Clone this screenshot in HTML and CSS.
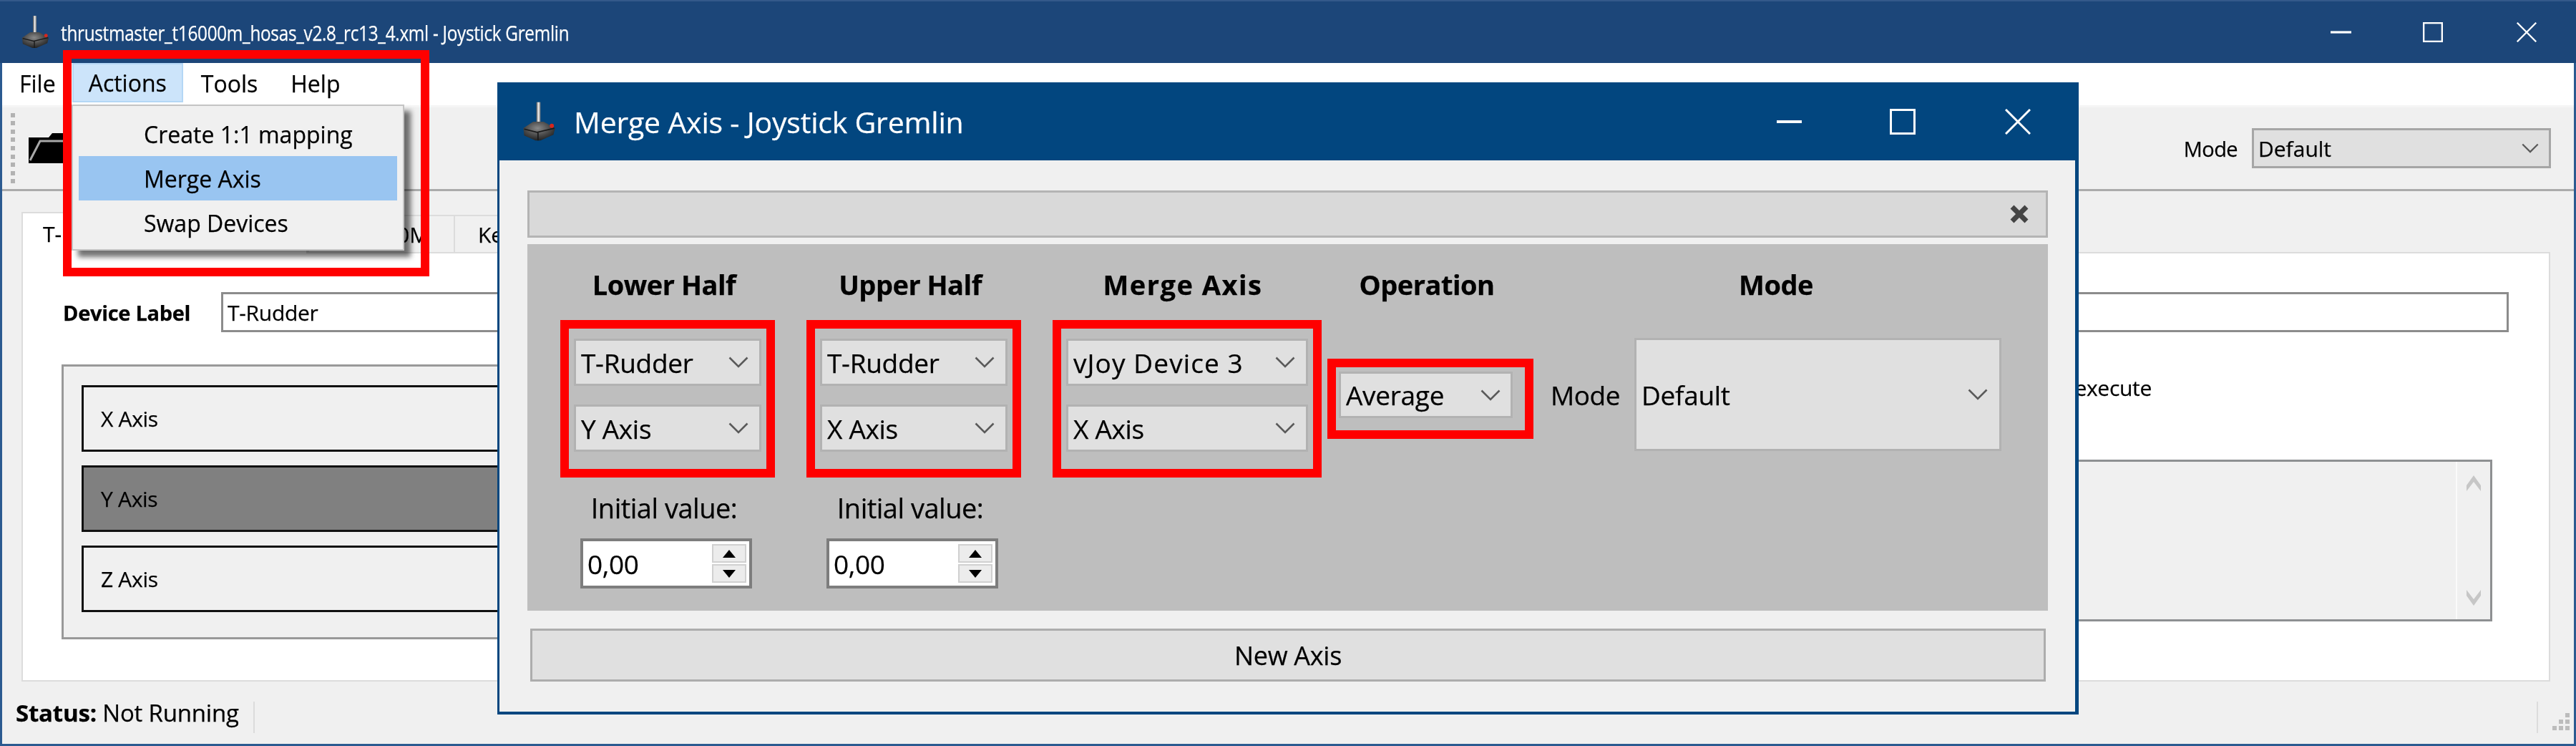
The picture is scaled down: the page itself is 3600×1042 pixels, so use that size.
FILE: index.html
```html
<!DOCTYPE html>
<html lang="en">
<head>
<meta charset="utf-8">
<title>Joystick Gremlin</title>
<link rel="stylesheet" href="styles.css">
</head>
<body>
<svg class="defs" width="0" height="0" aria-hidden="true">
  <defs>
    <linearGradient id="stick" x1="0" x2="1" y1="0" y2="0"><stop offset="0" stop-color="#555"/><stop offset="0.5" stop-color="#eee"/><stop offset="1" stop-color="#777"/></linearGradient>
    <radialGradient id="base" cx="0.45" cy="0.35" r="0.7"><stop offset="0" stop-color="#8a8a8a"/><stop offset="0.55" stop-color="#4a4a4a"/><stop offset="1" stop-color="#1c1c1c"/></radialGradient>
    <symbol id="joy" viewBox="0 0 44 48">
      <rect x="19" y="0" width="5" height="28" fill="url(#stick)"/>
      <path d="M3 32 L15 24 L28 24 L42 32 L40 40 L24 47 L18 47 L4 41 Z" fill="url(#base)"/>
      <path d="M21 36 V47 M4 33 L20 37 L41 32" stroke="#1a1a1a" stroke-width="1.5" fill="none"/>
      <circle cx="38" cy="29" r="2.6" fill="#d9261c"/>
    </symbol>
    <symbol id="chev" viewBox="0 0 28 16">
      <path d="M1.5 1.5 L14 14 L26.5 1.5" fill="none" stroke="#5a5a5a" stroke-width="2.6"/>
    </symbol>
    <symbol id="min" viewBox="0 0 36 4"><rect width="36" height="4" fill="#fff"/></symbol>
    <symbol id="max" viewBox="0 0 36 36"><rect x="1.5" y="1.5" width="33" height="33" fill="none" stroke="#fff" stroke-width="3"/></symbol>
    <symbol id="cls" viewBox="0 0 36 36"><path d="M1 1 L35 35 M35 1 L1 35" fill="none" stroke="#fff" stroke-width="3"/></symbol>
  </defs>
</svg>

<div class="screen">
  <div class="app">
    <header class="titlebar">
      <svg class="title-icon"><use href="#joy"/></svg>
      <span class="title-text">thrustmaster_t16000m_hosas_v2.8_rc13_4.xml - Joystick Gremlin</span>
      <div class="winbtns">
        <svg class="wb wb-min"><use href="#min"/></svg>
        <svg class="wb wb-max"><use href="#max"/></svg>
        <svg class="wb wb-cls"><use href="#cls"/></svg>
      </div>
    </header>

    <nav class="menubar">
      <span class="menu-item">File</span>
      <span class="menu-item menu-item-active">Actions</span>
      <span class="menu-item">Tools</span>
      <span class="menu-item">Help</span>
    </nav>

    <div class="toolbar">
      <div class="grip"><i></i><i></i><i></i><i></i><i></i><i></i><i></i><i></i><i></i></div>
      <svg class="folder" viewBox="0 0 64 42">
        <path d="M0 6 H28 L33 0 H56 L60 6 H64 V42 H0 Z" fill="#000"/>
        <path d="M2 38 L16 11 H64" fill="none" stroke="#a8a8a8" stroke-width="3"/>
      </svg>
      <div class="toolbar-mode">
        <span class="toolbar-mode-label">Mode</span>
        <div class="select select-toolbar"><span>Default</span><svg class="chev chev-small"><use href="#chev"/></svg></div>
      </div>
    </div>

    <main class="content">
      <div class="tabs">
        <div class="tab tab-active">T-Rudder</div>
        <div class="tab tab-second">T.16000M</div>
        <div class="tab tab-third">Keyboard</div>
      </div>
      <section class="tab-panel">
        <div class="label-row">
          <label class="device-label">Device Label</label>
          <div class="text-input">T-Rudder</div>
        </div>
        <div class="panel-columns">
          <div class="axis-group">
            <div class="axis-row">X Axis</div>
            <div class="axis-row axis-row-selected">Y Axis</div>
            <div class="axis-row">Z Axis</div>
          </div>
          <div class="action-column">
            <div class="exec-line">execute</div>
            <div class="list-box">
              <div class="list-scroll">
                <svg class="scroll-arrow" viewBox="0 0 22 26"><path d="M1 24 V16 L11 2 L21 16 V24 L11 11 Z" fill="#c6c6c6"/></svg>
                <svg class="scroll-arrow" viewBox="0 0 22 26"><path d="M1 2 V10 L11 24 L21 10 V2 L11 15 Z" fill="#c6c6c6"/></svg>
              </div>
            </div>
          </div>
        </div>
      </section>
    </main>

    <footer class="statusbar">
      <span class="status-text"><b>Status:</b> Not Running</span>
      <span class="status-sep"></span>
      <span class="status-sep status-sep-right"></span>
      <div class="size-grip"><i></i><i></i><i></i><i></i><i></i><i></i></div>
    </footer>
  </div>

  <div class="dropdown">
    <div class="dropdown-item">Create 1:1 mapping</div>
    <div class="dropdown-item dropdown-item-hover">Merge Axis</div>
    <div class="dropdown-item">Swap Devices</div>
  </div>
  <div class="annotation-menu"></div>

  <div class="dialog">
    <header class="dialog-title">
      <svg class="dialog-icon"><use href="#joy"/></svg>
      <span class="dialog-title-text">Merge Axis - Joystick Gremlin</span>
      <div class="winbtns dialog-winbtns">
        <svg class="dwb dwb-min"><use href="#min"/></svg>
        <svg class="dwb dwb-max"><use href="#max"/></svg>
        <svg class="dwb dwb-cls"><use href="#cls"/></svg>
      </div>
    </header>
    <div class="dialog-body">
      <div class="entry-header">
        <svg class="entry-close" viewBox="0 0 30 30"><path d="M5 5 L25 25 M25 5 L5 25" fill="none" stroke="#444" stroke-width="7"/></svg>
      </div>
      <div class="entry-panel">
        <div class="col col-half">
          <div class="col-head">Lower Half</div>
          <div class="redbox redbox-pair">
            <div class="select select-half"><span>T-Rudder</span><svg class="chev"><use href="#chev"/></svg></div>
            <div class="select select-half"><span>Y Axis</span><svg class="chev"><use href="#chev"/></svg></div>
          </div>
          <div class="init-label">Initial value:</div>
          <div class="spin"><span class="spin-value">0,00</span><div class="spin-btns"><div class="spin-btn"><i class="tri-up"></i></div><div class="spin-btn"><i class="tri-down"></i></div></div></div>
        </div>
        <div class="col col-half">
          <div class="col-head">Upper Half</div>
          <div class="redbox redbox-pair">
            <div class="select select-half"><span>T-Rudder</span><svg class="chev"><use href="#chev"/></svg></div>
            <div class="select select-half"><span>X Axis</span><svg class="chev"><use href="#chev"/></svg></div>
          </div>
          <div class="init-label">Initial value:</div>
          <div class="spin"><span class="spin-value">0,00</span><div class="spin-btns"><div class="spin-btn"><i class="tri-up"></i></div><div class="spin-btn"><i class="tri-down"></i></div></div></div>
        </div>
        <div class="col col-merge">
          <div class="col-head col-head-wide">Merge Axis</div>
          <div class="redbox redbox-pair">
            <div class="select select-half"><span class="vjoy-text">vJoy Device 3</span><svg class="chev"><use href="#chev"/></svg></div>
            <div class="select select-half"><span>X Axis</span><svg class="chev"><use href="#chev"/></svg></div>
          </div>
        </div>
        <div class="col col-op">
          <div class="col-head">Operation</div>
          <div class="redbox redbox-op">
            <div class="select select-op"><span>Average</span><svg class="chev"><use href="#chev"/></svg></div>
          </div>
        </div>
        <div class="col col-mode">
          <div class="col-head">Mode</div>
          <div class="mode-row">
            <span class="mode-label">Mode</span>
            <div class="select select-mode"><span>Default</span><svg class="chev"><use href="#chev"/></svg></div>
          </div>
        </div>
      </div>
      <div class="new-axis">New Axis</div>
    </div>
  </div>
</div>
</body>
</html>
```

FILE: styles.css
```css
* { box-sizing: border-box; }
html, body { margin: 0; padding: 0; background: #f0f0f0; }
body { font-family: "Open Sans", "Noto Sans", sans-serif; color: #000; overflow: hidden; -webkit-text-stroke: 0.25px; }
.defs { position: absolute; }
.screen { position: relative; width: 3600px; height: 1042px; overflow: hidden; filter: blur(0.6px); }

/* main window */
.app { display: flex; flex-direction: column; width: 3600px; height: 1042px; background: #f0f0f0; border-left: 3px solid #2b5a90; border-right: 3px solid #2b5a90; border-bottom: 3px solid #2b5a90; }
.titlebar { flex: none; display: flex; align-items: center; height: 88px; margin: 0 -3px; padding-left: 28px; background: #1c4679; border-top: 2px solid #34598a; color: #fff; }
.title-icon { flex: none; width: 42px; height: 46px; }
.title-text { flex: none; width: 845px; margin-left: 15px; font-size: 30px; white-space: nowrap; letter-spacing: -0.35px; transform: scaleX(0.81); transform-origin: left center; }
.winbtns { display: flex; align-items: center; margin-left: auto; padding-right: 54px; }
.wb { display: block; }
.wb-min { width: 29px; height: 4px; }
.wb-max { width: 28px; height: 28px; margin-left: 100px; }
.wb-cls { width: 30px; height: 28px; margin-left: 102px; }

.menubar { flex: none; display: flex; height: 62px; padding: 0 0 4px 1px; background: #fff; border-bottom: 3px solid #f5f5f5; font-size: 32px; }
.menu-item { display: flex; align-items: center; padding: 2px 23px 0; height: 55px; }
.menu-item:nth-child(3) { padding-left: 25px; }
.menu-item-active { background: #cce4fa; border: 2px solid #b4d7f5; padding: 0 21px; }

.toolbar { flex: none; display: flex; align-items: center; height: 117px; padding-left: 12px; border-bottom: 3px solid #ababab; }
.grip { display: flex; flex-direction: column; gap: 5.6px; width: 6px; }
.grip i { display: block; width: 6px; height: 6px; background: #b2b2b2; }
.folder { width: 64px; height: 42px; margin-left: 19px; }
.toolbar-mode { display: flex; align-items: center; margin-left: auto; padding-right: 32px; }
.toolbar-mode-label { font-size: 29px; margin-right: 20px; letter-spacing: -0.6px; }

.select { display: flex; align-items: center; justify-content: space-between; background: #e0e0e0; border: 3px solid #b2b2b2; white-space: nowrap; }
.select-toolbar { width: 418px; height: 56px; padding: 0 14px 0 6px; font-size: 30px; border-color: #a6a6a6; }
.chev { flex: none; display: block; width: 28px; height: 16px; }
.chev-small { width: 24px; height: 14px; }

.content { flex: 1; display: flex; flex-direction: column; padding: 28px 33px 0 27px; }
.tabs { flex: none; display: flex; align-items: flex-end; height: 57px; font-size: 30px; }
.tab { display: flex; align-items: center; background: #f0f0f0; border: 2px solid #dcdcdc; border-bottom: none; white-space: nowrap; height: 52px; }
.tab-active { width: 400px; height: 58px; padding-left: 28px; margin-bottom: -2px; position: relative; background: #fff; }
.tab-second { width: 206px; padding-left: 30px; }
.tab-third { width: 220px; padding-left: 32px; margin-left: -2px; }
.tab-panel { flex: none; height: 600px; background: #fff; border: 2px solid #dcdcdc; padding: 54px 0 0 56px; }
.label-row { display: flex; align-items: center; height: 56px; }
.device-label { width: 221px; font-size: 29px; font-weight: 700; letter-spacing: -0.3px; }
.text-input { width: 3197px; height: 56px; display: flex; align-items: center; padding-left: 6px; border: 3px solid #8c8c8c; background: #fff; font-size: 30px; letter-spacing: -0.3px; }
.panel-columns { display: flex; margin-top: 45px; }
.axis-group { flex: none; width: 1400px; height: 384px; margin-left: -2px; padding: 26px 25px 0; display: flex; flex-direction: column; gap: 19px; background: #f0f0f0; border: 3px solid #999; }
.axis-row { height: 93px; display: flex; align-items: center; padding-left: 24px; border: 3px solid #111; font-size: 30px; letter-spacing: -0.3px; background: #f0f0f0; }
.axis-row-selected { background: #808080; }
.action-column { flex: none; width: 1996px; margin-left: 14px; }
.exec-line { margin-top: 11px; height: 44px; line-height: 44px; width: 1507px; font-size: 30px; text-align: right; letter-spacing: -0.3px; }
.list-box { display: flex; justify-content: flex-end; width: 1983px; height: 226px; margin-top: 78px; background: #f0f0f0; border: 3px solid #8e9092; }
.list-scroll { width: 48px; height: 100%; border-left: 2px solid #fafafa; display: flex; flex-direction: column; align-items: center; justify-content: space-between; padding: 17px 0 17px; }
.scroll-arrow { width: 22px; height: 26px; }

.statusbar { flex: 1; display: flex; align-items: center; padding-left: 19px; font-size: 33px; }
.status-text { white-space: nowrap; letter-spacing: -0.2px; }
.status-sep { width: 2px; height: 44px; margin-left: 20px; margin-top: 12px; background: #dcdcdc; }
.status-sep-right { margin-left: auto; margin-right: 20px; }
.size-grip { display: grid; grid-template-columns: repeat(3, 6px); grid-template-rows: repeat(3, 6px); gap: 3px; margin-top: 24px; margin-right: 6px; }
.size-grip i { display: block; background: #bcbcbc; }
.size-grip i:nth-child(1) { grid-column: 3; grid-row: 1; }
.size-grip i:nth-child(2) { grid-column: 2; grid-row: 2; }
.size-grip i:nth-child(3) { grid-column: 3; grid-row: 2; }
.size-grip i:nth-child(4) { grid-column: 1; grid-row: 3; }
.size-grip i:nth-child(5) { grid-column: 2; grid-row: 3; }
.size-grip i:nth-child(6) { grid-column: 3; grid-row: 3; }

/* dropdown */
.dropdown { position: absolute; left: 100px; top: 146px; width: 465px; height: 204px; padding: 8px 8px; background: #f0f0f0; border: 2px solid #c4c4c4; box-shadow: 9px 9px 7px rgba(0, 0, 0, 0.55); font-size: 32px; }
.dropdown-item { display: flex; align-items: center; height: 62px; padding-left: 91px; white-space: nowrap; }
.dropdown-item-hover { background: #99c5f1; }
.annotation-menu { position: absolute; left: 88px; top: 70px; width: 512px; height: 316px; border: 12px solid #f00; }

/* dialog */
.dialog { position: absolute; left: 695px; top: 115px; width: 2210px; height: 883px; display: flex; flex-direction: column; background: #02467f; }
.dialog-title { flex: none; display: flex; align-items: center; height: 109px; padding-left: 33px; color: #fff; }
.dialog-icon { flex: none; width: 50px; height: 56px; }
.dialog-title-text { margin-left: 24px; font-size: 41px; white-space: nowrap; letter-spacing: -0.2px; }
.dialog-winbtns { padding-right: 67px; }
.dwb { display: block; }
.dwb-min { width: 35px; height: 4px; }
.dwb-max { width: 36px; height: 36px; margin-left: 123px; }
.dwb-cls { width: 36px; height: 36px; margin-left: 125px; }
.dialog-body { flex: 1; margin: 0 5px 4px 3px; padding: 42px 38px 0 39px; background: #f0f0f0; display: flex; flex-direction: column; }
.entry-header { flex: none; height: 66px; display: flex; align-items: center; justify-content: flex-end; padding-right: 22px; background: #d9d9d9; border: 3px solid #b4b4b4; }
.entry-close { width: 30px; height: 30px; display: block; }
.entry-panel { flex: none; display: flex; height: 512px; margin-top: 9px; padding-left: 46px; background: #bebebe; font-size: 37px; }
.col { flex: none; display: flex; flex-direction: column; align-items: center; }
.col-half { width: 300px; margin-right: 44px; }
.col-merge { width: 376px; margin-right: 8px; }
.col-op { width: 288px; }
.col-mode { width: 630px; margin-left: 24px; align-items: stretch; }
.col-head { height: 106px; padding: 34px 10px 0 0; line-height: 44px; font-weight: 700; font-size: 38px; text-align: center; white-space: nowrap; letter-spacing: -0.5px; }
.col-head-wide { letter-spacing: 1.5px; padding-right: 12px; }
.col-mode .col-head { padding-right: 0; }
.redbox { border: 12px solid #f00; padding-left: 7px; padding-right: 7px; }
.redbox-pair { width: 100%; height: 220px; padding-top: 14px; display: flex; flex-direction: column; gap: 26px; }
.redbox-op { width: 100%; height: 112px; margin-top: 54px; padding: 6px 4px 0; }
.select-half { width: 100%; height: 66px; padding: 0 15px 0 7px; font-size: 37px; letter-spacing: -0.3px; }
.vjoy-text { letter-spacing: 1.1px; }
.select-op { width: 243px; height: 65px; padding: 0 14px 0 7px; font-size: 37px; letter-spacing: -0.3px; }
.mode-row { display: flex; align-items: center; gap: 23px; margin-top: 25px; }
.mode-label { font-size: 37px; width: 94px; letter-spacing: -0.5px; }
.select-mode { width: 513px; height: 158px; padding: 0 16px 0 7px; font-size: 37px; letter-spacing: -0.3px; }
.init-label { margin: 22px 10px 0 0; height: 40px; line-height: 40px; font-size: 38px; white-space: nowrap; letter-spacing: -0.5px; }
.spin { display: flex; align-items: center; justify-content: space-between; width: 240px; height: 70px; margin-top: 23px; margin-right: 4px; padding-left: 6px; padding-right: 4px; background: #fff; border: 4px solid #7d7d7d; }
.spin-value { font-size: 37px; letter-spacing: -0.4px; }
.spin-btns { display: flex; flex-direction: column; gap: 2px; width: 48px; }
.spin-btn { display: flex; align-items: center; justify-content: center; height: 26px; background: #ececec; border: 2px solid #d0d0d0; }
.tri-up { width: 0; height: 0; border-left: 9px solid transparent; border-right: 9px solid transparent; border-bottom: 11px solid #000; }
.tri-down { width: 0; height: 0; border-left: 9px solid transparent; border-right: 9px solid transparent; border-top: 11px solid #000; }
.new-axis { flex: none; display: flex; align-items: center; justify-content: center; height: 74px; margin: 25px 3px 0 4px; background: #e0e0e0; border: 3px solid #adadad; font-size: 36px; letter-spacing: -0.3px; }
```
